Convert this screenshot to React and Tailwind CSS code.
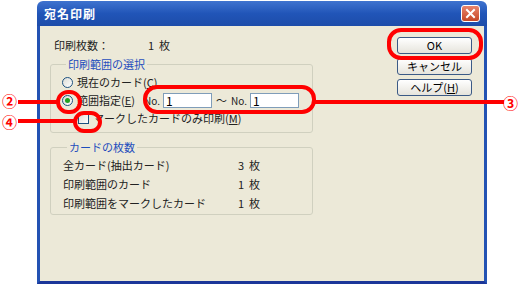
import React from 'react'

const font = { fontFamily: '"MS UI Gothic", "Noto Sans CJK JP", sans-serif' }

function Radio({ checked }) {
  return (
    <span className="relative w-[11px] h-[11px] rounded-full border border-[#1c5180] bg-gradient-to-br from-[#dcdcd6] to-white flex items-center justify-center shrink-0">
      {checked && <span className="w-[5px] h-[5px] rounded-full bg-[#21a121]" />}
    </span>
  )
}

function Btn({ children }) {
  return (
    <div className="w-[75px] h-[17px] rounded-[3px] border border-[#3b5a86] bg-gradient-to-b from-white to-[#e6e4dc] flex items-center justify-center text-[11px] text-black leading-none">
      {children}
    </div>
  )
}

function NumBox() {
  return (
    <div className="w-[49px] h-[15px] bg-white border border-[#7f9db9] text-[12px] leading-[13px] pl-[2px] text-black">1</div>
  )
}

export default function App() {
  return (
    <div className="relative w-[524px] h-[285px] bg-white overflow-hidden" style={font}>
      <div className="ml-[37px] mt-[1px] w-[450px] h-[283px] flex flex-col rounded-t-[6px] overflow-hidden">
        <div className="h-[25px] shrink-0 flex items-center justify-between px-[7px] bg-gradient-to-b from-[#3f73cf] via-[#2155b8] to-[#1d4ca9]">
          <span className="text-white font-bold text-[12px] tracking-[1px]">宛名印刷</span>
          <div className="w-[19px] h-[17px] rounded-[3px] border border-white bg-gradient-to-b from-[#e8846a] to-[#c54524] flex items-center justify-center">
            <svg width="11" height="11" viewBox="0 0 11 11">
              <path d="M2 2 L9 9 M9 2 L2 9" stroke="white" strokeWidth="2" strokeLinecap="square" />
            </svg>
          </div>
        </div>
        <div className="flex-1 bg-[#ece9d8] border-x-[3px] border-b-[3px] border-x-[#2352b3] border-b-[#1b3699] flex text-[11px] text-[#222]">
          <div className="w-[263px] ml-[10px] flex flex-col">
            <div className="h-[14px] mt-[12px] pl-[4px] flex items-center">
              <span className="w-[94px]">印刷枚数：</span>
              <span>1&nbsp;&nbsp;枚</span>
            </div>
            <fieldset className="mt-[5px] border border-[#d0d0bf] rounded-[3px] pl-[11px] pt-[3px] pb-[6px] flex flex-col gap-[2px]">
              <legend className="ml-[4px] px-[2px] text-[#1e4dbd] leading-[14px]">印刷範囲の選択</legend>
              <div className="h-[16px] flex items-center gap-[4px]">
                <Radio />
                <span>現在のカード(<u>C</u>)</span>
              </div>
              <div className="h-[16px] flex items-center">
                <Radio checked />
                <span className="ml-[4px] w-[67px]">範囲指定(<u>E</u>)</span>
                <span className="mr-[3px] text-[10px]">No.</span>
                <NumBox />
                <span className="mx-[4px]">～</span>
                <span className="mr-[3px] text-[10px]">No.</span>
                <NumBox />
              </div>
              <div className="h-[16px] flex items-center pl-[16px] gap-[4px]">
                <span className="w-[11px] h-[11px] border border-[#1c5180] bg-gradient-to-br from-[#dcdcd6] to-white shrink-0" />
                <span>マークしたカードのみ印刷(<u>M</u>)</span>
              </div>
            </fieldset>
            <fieldset className="mt-[7px] border border-[#d0d0bf] rounded-[3px] pl-[12px] pt-[2px] pb-[1px] flex flex-col">
              <legend className="ml-[4px] px-[2px] text-[#1e4dbd] leading-[14px]">カードの枚数</legend>
              {[['全カード(抽出カード)', '3'], ['印刷範囲のカード', '1'], ['印刷範囲をマークしたカード', '1']].map(([l, v]) => (
                <div key={l} className="h-[19px] flex items-center">
                  <span className="w-[175px]">{l}</span>
                  <span>{v}&nbsp;&nbsp;枚</span>
                </div>
              ))}
            </fieldset>
          </div>
          <div className="ml-[84px] pt-[11px] flex flex-col gap-[4px]">
            <Btn>OK</Btn>
            <Btn>キャンセル</Btn>
            <Btn>ヘルプ(<u>H</u>)</Btn>
          </div>
        </div>
      </div>

      {/* red annotations */}
      <div className="absolute left-[387px] top-[28px] w-[96px] h-[32px] rounded-[14px] border-[4px] border-[#ff0000]" />
      <div className="absolute left-[143px] top-[85px] w-[173px] h-[29px] rounded-[14px] border-[4px] border-[#ff0000]" />
      <div className="absolute left-[315px] top-[100px] w-[189px] h-[4px] bg-[#ff0000]" />
      <div className="absolute left-[56px] top-[90px] w-[26px] h-[24px] rounded-full border-[4px] border-[#ff0000]" />
      <div className="absolute left-[18px] top-[100px] w-[39px] h-[4px] bg-[#ff0000]" />
      <div className="absolute left-[73px] top-[111px] w-[29px] h-[22px] rounded-full border-[4px] border-[#ff0000]" />
      <div className="absolute left-[18px] top-[119px] w-[56px] h-[4px] bg-[#ff0000]" />
      <span className="absolute left-[2px] top-[93px] text-[15px] leading-[15px] text-[#ff0000] font-bold">②</span>
      <span className="absolute left-[2px] top-[114px] text-[15px] leading-[15px] text-[#ff0000] font-bold">④</span>
      <span className="absolute left-[503px] top-[95px] text-[15px] leading-[15px] text-[#ff0000] font-bold">③</span>
    </div>
  )
}
